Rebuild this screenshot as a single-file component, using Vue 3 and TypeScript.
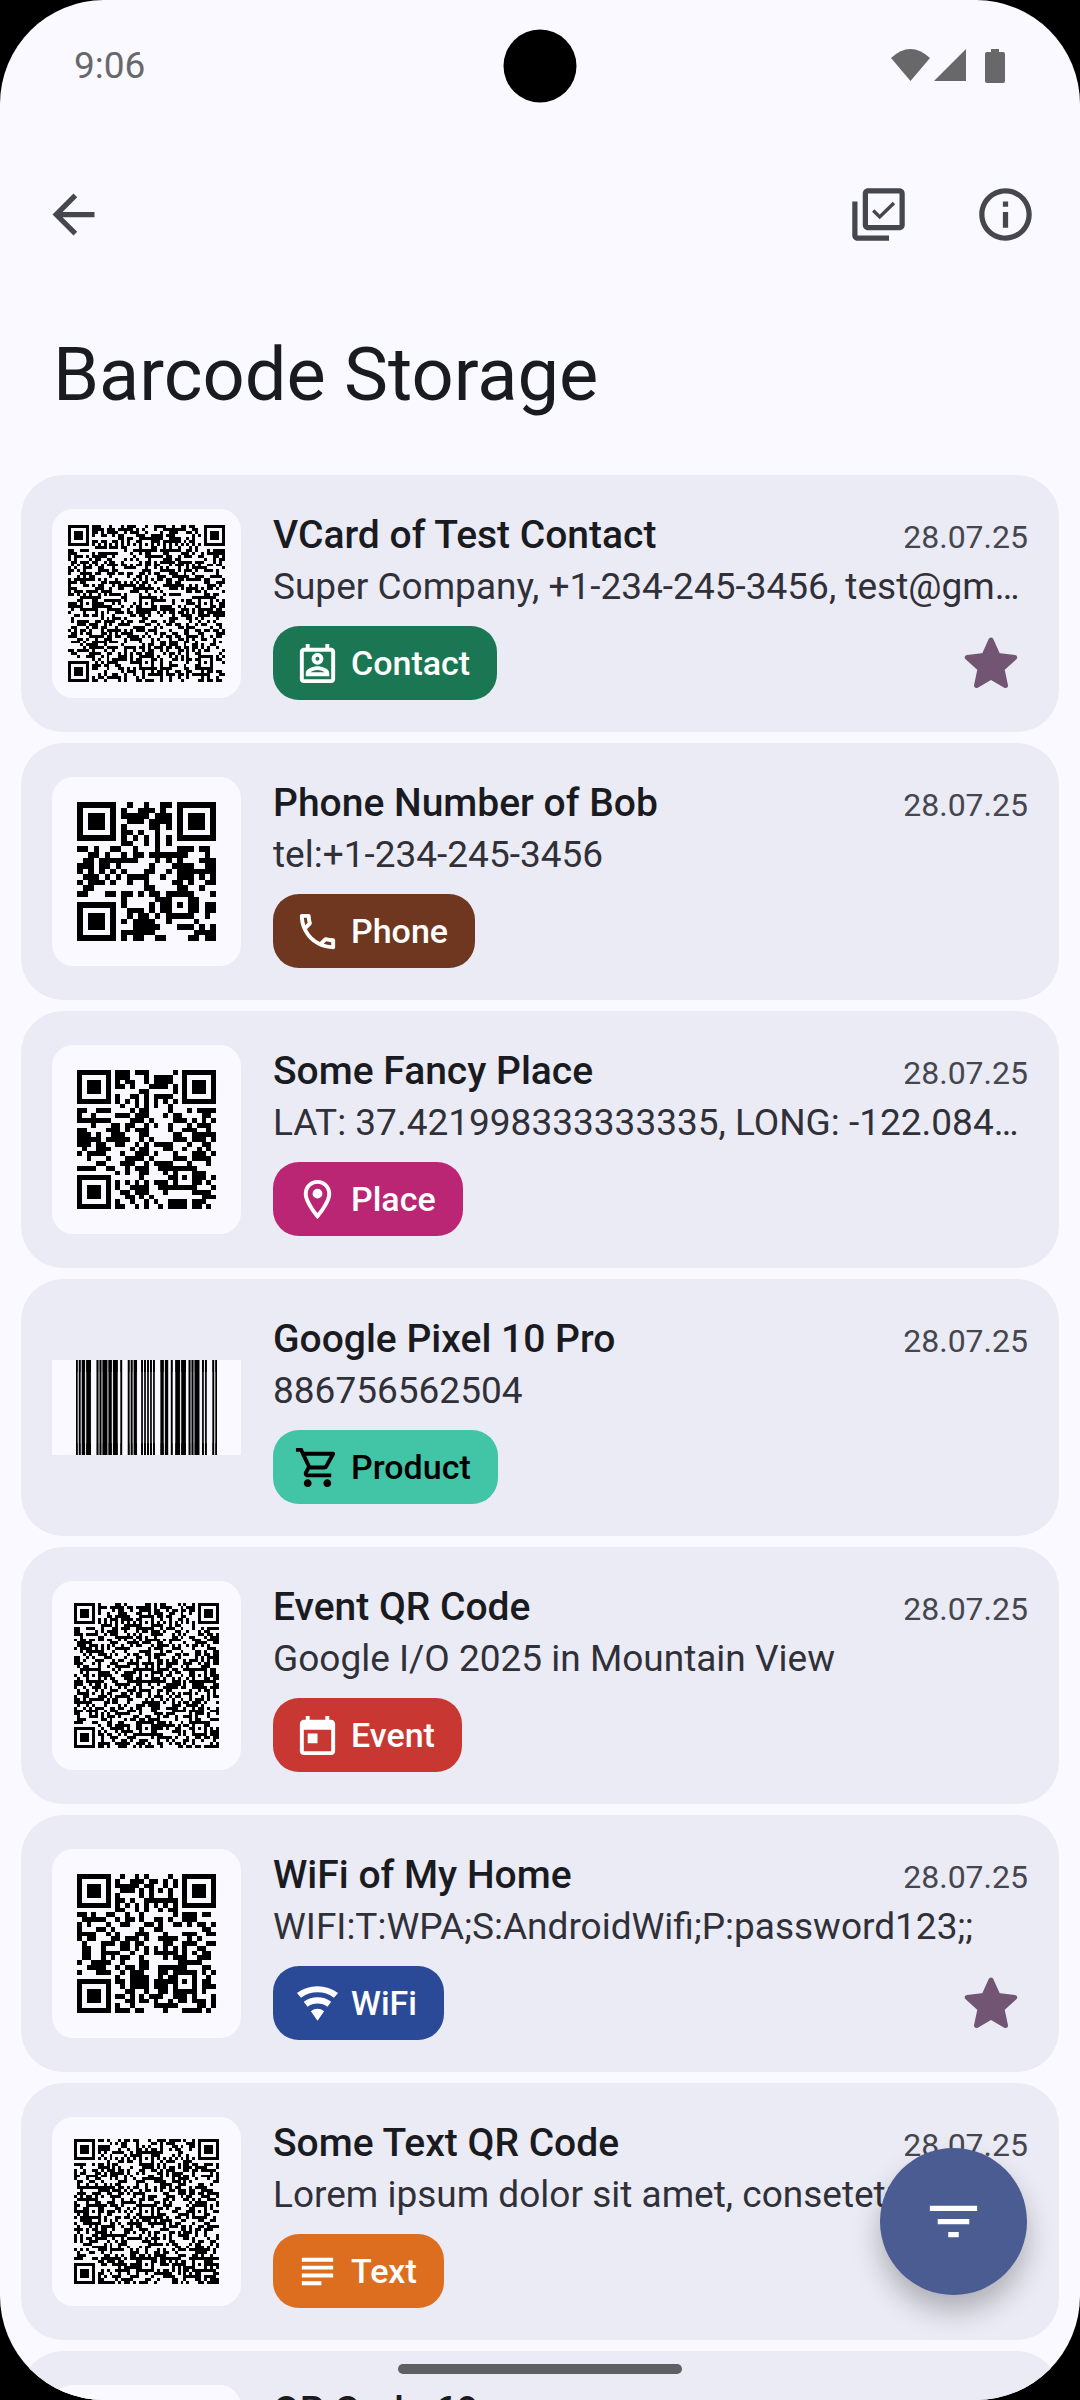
<script setup lang="ts">
type Matrix = boolean[][]

interface Chip {
  label: string
  icon: string
  background: string
  color: string
}

interface Entry {
  title: string
  detail: string
  date: string
  chip: Chip
  starred?: boolean
  qr?: { content: string; version: number; mask?: number; size: number }
  ean?: string
}

// Level L parameters per version: total codewords, ECC codewords per block, blocks, alignment centres
const VERSIONS: Record<number, [number, number, number, number[]]> = {
  2: [44, 10, 1, [6, 18]],
  3: [70, 15, 1, [6, 22]],
  8: [242, 24, 2, [6, 24, 42]],
  9: [292, 30, 2, [6, 26, 46]],
}

const MASKS: ((x: number, y: number) => boolean)[] = [
  (x, y) => (x + y) % 2 === 0,
  (_x, y) => y % 2 === 0,
  (x) => x % 3 === 0,
  (x, y) => (x + y) % 3 === 0,
  (x, y) => (Math.floor(x / 3) + Math.floor(y / 2)) % 2 === 0,
  (x, y) => ((x * y) % 2) + ((x * y) % 3) === 0,
  (x, y) => (((x * y) % 2) + ((x * y) % 3)) % 2 === 0,
  (x, y) => (((x + y) % 2) + ((x * y) % 3)) % 2 === 0,
]

function gfMultiply(a: number, b: number): number {
  let product = 0
  for (let i = 7; i >= 0; i--) {
    product = (product << 1) ^ ((product >>> 7) * 0x11d)
    product ^= ((b >>> i) & 1) * a
  }
  return product
}

function eccFor(data: number[], degree: number): number[] {
  const divisor: number[] = new Array(degree).fill(0)
  divisor[degree - 1] = 1
  let root = 1
  for (let i = 0; i < degree; i++) {
    for (let j = 0; j < degree; j++) {
      divisor[j] = gfMultiply(divisor[j], root)
      if (j + 1 < degree) divisor[j] ^= divisor[j + 1]
    }
    root = gfMultiply(root, 2)
  }
  const result: number[] = new Array(degree).fill(0)
  for (const byte of data) {
    const factor = byte ^ (result.shift() as number)
    result.push(0)
    divisor.forEach((c, i) => (result[i] ^= gfMultiply(c, factor)))
  }
  return result
}

function codewords(content: string, version: number): number[] {
  const [total, ecc, blocks] = VERSIONS[version]
  const capacity = total - ecc * blocks
  const bits: number[] = []
  const push = (value: number, length: number) => {
    for (let i = length - 1; i >= 0; i--) bits.push((value >>> i) & 1)
  }
  const bytes = Array.from(new TextEncoder().encode(content))
  // ECI header: UTF-8
  push(7, 4)
  push(26, 8)
  push(4, 4)
  push(bytes.length, 8)
  bytes.forEach((b) => push(b, 8))
  push(0, Math.min(4, capacity * 8 - bits.length))
  while (bits.length % 8) bits.push(0)
  for (let pad = 0xec; bits.length < capacity * 8; pad ^= 0xec ^ 0x11) push(pad, 8)

  const data: number[] = []
  for (let i = 0; i < capacity; i++) data.push(parseInt(bits.slice(i * 8, i * 8 + 8).join(''), 2))
  const length = capacity / blocks
  const parts = Array.from({ length: blocks }, (_, b) => data.slice(b * length, (b + 1) * length))
  const checks = parts.map((p) => eccFor(p, ecc))
  const out: number[] = []
  for (let i = 0; i < length; i++) parts.forEach((p) => out.push(p[i]))
  for (let i = 0; i < ecc; i++) checks.forEach((c) => out.push(c[i]))
  return out
}

function qrMatrix(content: string, version: number, mask: number): Matrix {
  const n = 17 + version * 4
  const dark: Matrix = Array.from({ length: n }, () => new Array(n).fill(false))
  const fixed: Matrix = Array.from({ length: n }, () => new Array(n).fill(false))
  const set = (x: number, y: number, on: boolean) => {
    if (x < 0 || y < 0 || x >= n || y >= n) return
    dark[y][x] = on
    fixed[y][x] = true
  }

  for (let i = 0; i < n; i++) {
    set(6, i, i % 2 === 0)
    set(i, 6, i % 2 === 0)
  }
  for (const [cx, cy] of [[3, 3], [n - 4, 3], [3, n - 4]]) {
    for (let dy = -4; dy <= 4; dy++)
      for (let dx = -4; dx <= 4; dx++) {
        const d = Math.max(Math.abs(dx), Math.abs(dy))
        set(cx + dx, cy + dy, d !== 2 && d !== 4)
      }
  }
  const centres = VERSIONS[version][3]
  const last = centres.length - 1
  centres.forEach((cx, i) =>
    centres.forEach((cy, j) => {
      if ((i === 0 && j === 0) || (i === 0 && j === last) || (i === last && j === 0)) return
      for (let dy = -2; dy <= 2; dy++)
        for (let dx = -2; dx <= 2; dx++) set(cx + dx, cy + dy, Math.max(Math.abs(dx), Math.abs(dy)) !== 1)
    }),
  )

  const format = (1 << 3) | mask
  let rem = format
  for (let i = 0; i < 10; i++) rem = (rem << 1) ^ ((rem >>> 9) * 0x537)
  const formatBits = ((format << 10) | rem) ^ 0x5412
  const bit = (value: number, i: number) => ((value >>> i) & 1) === 1
  for (let i = 0; i <= 5; i++) set(8, i, bit(formatBits, i))
  set(8, 7, bit(formatBits, 6))
  set(8, 8, bit(formatBits, 7))
  set(7, 8, bit(formatBits, 8))
  for (let i = 9; i < 15; i++) set(14 - i, 8, bit(formatBits, i))
  for (let i = 0; i < 8; i++) set(n - 1 - i, 8, bit(formatBits, i))
  for (let i = 8; i < 15; i++) set(8, n - 15 + i, bit(formatBits, i))
  set(8, n - 8, true)

  if (version >= 7) {
    let r = version
    for (let i = 0; i < 12; i++) r = (r << 1) ^ ((r >>> 11) * 0x1f25)
    const versionBits = (version << 12) | r
    for (let i = 0; i < 18; i++) {
      const a = n - 11 + (i % 3)
      const b = Math.floor(i / 3)
      set(a, b, bit(versionBits, i))
      set(b, a, bit(versionBits, i))
    }
  }

  const stream = codewords(content, version)
  let k = 0
  for (let right = n - 1; right >= 1; right -= 2) {
    if (right === 6) right = 5
    for (let v = 0; v < n; v++)
      for (let j = 0; j < 2; j++) {
        const x = right - j
        const y = ((right + 1) & 2) === 0 ? n - 1 - v : v
        if (fixed[y][x]) continue
        const on = k < stream.length * 8 && bit(stream[k >>> 3], 7 - (k & 7))
        dark[y][x] = on !== MASKS[mask](x, y)
        k++
      }
  }
  return dark
}

// Lower is better: long runs, 2x2 blocks, finder lookalikes and imbalance are penalised
function penalty(m: Matrix): number {
  const n = m.length
  let score = 0
  let total = 0
  const lines = m.concat(m.map((_, x) => m.map((row) => row[x])))
  for (const line of lines) {
    const s = line.map((on) => (on ? '1' : '0')).join('')
    for (const run of s.match(/0{5,}|1{5,}/g) ?? []) score += run.length - 2
    for (let i = 0; i + 7 <= n; i++) {
      if (s.slice(i, i + 7) !== '1011101') continue
      const before = s.slice(Math.max(0, i - 4), i)
      const after = s.slice(i + 7, i + 11)
      if (!before.includes('1') || !after.includes('1')) score += 40
    }
  }
  for (let y = 0; y < n; y++)
    for (let x = 0; x < n; x++) {
      if (m[y][x]) total++
      if (x + 1 < n && y + 1 < n && m[y][x] === m[y][x + 1] && m[y][x] === m[y + 1][x] && m[y][x] === m[y + 1][x + 1])
        score += 3
    }
  return score + Math.floor((Math.abs(total * 2 - n * n) * 10) / (n * n)) * 10
}

function bestMatrix(content: string, version: number): Matrix {
  return MASKS.map((_, mask) => qrMatrix(content, version, mask))
    .map((m) => ({ m, score: penalty(m) }))
    .reduce((a, b) => (b.score < a.score ? b : a)).m
}

function runs(row: boolean[], y: number): string {
  let d = ''
  for (let x = 0; x < row.length; x++) {
    if (!row[x]) continue
    const start = x
    while (x + 1 < row.length && row[x + 1]) x++
    d += `M${start} ${y}h${x - start + 1}v1h-${x - start + 1}z`
  }
  return d
}

function qrPath(e: Entry): string {
  if (!e.qr) return ''
  const { content, version, mask } = e.qr
  const matrix = mask === undefined ? bestMatrix(content, version) : qrMatrix(content, version, mask)
  return matrix.map(runs).join('')
}

// EAN-13: the first digit selects the parity of the six left-hand digits
function eanPath(code: string): string {
  const left = ['0001101', '0011001', '0010011', '0111101', '0100011', '0110001', '0101111', '0111011', '0110111', '0001011']
  const parity = ['LLLLLL', 'LLGLGG', 'LLGGLG', 'LLGGGL', 'LGLLGG', 'LGGLLG', 'LGGGLL', 'LGLGLG', 'LGLGGL', 'LGGLGL']
  const invert = (s: string) => s.replace(/./g, (c) => (c === '1' ? '0' : '1'))
  const digits = code.split('').map(Number)
  let modules = '101'
  for (let i = 1; i <= 6; i++) {
    const l = left[digits[i]]
    modules += parity[digits[0]][i - 1] === 'L' ? l : invert(l).split('').reverse().join('')
  }
  modules += '01010'
  for (let i = 7; i <= 12; i++) modules += invert(left[digits[i]])
  modules += '101'
  return runs(modules.split('').map((m) => m === '1'), 0)
}

const icons: Record<string, string> = {
  contact:
    'M19 4h-1V2h-2v2H8V2H6v2H5c-1.1 0-2 .9-2 2v14c0 1.1.9 2 2 2h14c1.1 0 2-.9 2-2V6c0-1.1-.9-2-2-2zm0 16H5V6h14v14zM12 12.6c1.65 0 3-1.35 3-3s-1.35-3-3-3-3 1.35-3 3 1.35 3 3 3zm0-4c.55 0 1 .45 1 1s-.45 1-1 1-1-.45-1-1 .45-1 1-1zM12 13.4c-2.03 0-6 1.08-6 3.58v1.52h12v-1.53c0-2.51-3.97-3.57-6-3.57zM8.31 16.5c.69-.56 2.38-1.12 3.69-1.12s3.01.56 3.69 1.12H8.31z',
  phone:
    'M6.54 5c.06.89.21 1.76.45 2.59l-1.2 1.2c-.41-1.2-.67-2.47-.76-3.79h1.51m9.86 12.02c.85.24 1.72.39 2.6.45v1.49c-1.32-.09-2.59-.35-3.8-.75l1.2-1.19M7.5 3H4c-.55 0-1 .45-1 1 0 9.39 7.61 17 17 17 .55 0 1-.45 1-1v-3.49c0-.55-.45-1-1-1-1.24 0-2.45-.2-3.57-.57-.1-.04-.21-.05-.31-.05-.26 0-.51.1-.71.29l-2.2 2.2c-2.83-1.45-5.15-3.76-6.59-6.59l2.2-2.2c.28-.28.36-.67.25-1.02C8.7 6.45 8.5 5.25 8.5 4c0-.55-.45-1-1-1z',
  place:
    'M12 2C8.13 2 5 5.13 5 9c0 5.25 7 13 7 13s7-7.75 7-13c0-3.87-3.13-7-7-7zM7 9c0-2.76 2.24-5 5-5s5 2.24 5 5c0 2.88-2.88 7.19-5 9.88C9.92 16.21 7 11.85 7 9zM12 6.5a2.5 2.5 0 1 0 0 5a2.5 2.5 0 1 0 0-5z',
  product:
    'M15.55 13c.75 0 1.41-.41 1.75-1.03l3.58-6.49c.37-.66-.11-1.48-.87-1.48H5.21l-.94-2H1v2h2l3.6 7.59-1.35 2.44C4.52 15.37 5.48 17 7 17h12v-2H7l1.1-2h7.45zM6.16 6h12.15l-2.76 5H8.53L6.16 6zM7 18c-1.1 0-1.99.9-1.99 2S5.9 22 7 22s2-.9 2-2-.9-2-2-2zm10 0c-1.1 0-1.99.9-1.99 2s.89 2 1.99 2 2-.9 2-2-.9-2-2-2z',
  event:
    'M19 4h-1V2h-2v2H8V2H6v2H5c-1.1 0-2 .9-2 2v14c0 1.1.9 2 2 2h14c1.1 0 2-.9 2-2V6c0-1.1-.9-2-2-2zm0 16H5V9h14v11zM7 11h5v5H7z',
  wifi:
    'M1.5 6.6A17.7 17.7 0 0 1 22.5 6.6L20.4 9A14.5 14.5 0 0 0 3.6 9zM5 11.1A12 12 0 0 1 19 11.1L17.1 13.7A8.7 8.7 0 0 0 6.9 13.7zM8.6 15.9A6 6 0 0 1 15.4 15.9L12 20.8z',
  text: 'M14 17H4v2h10v-2zm6-8H4v2h16V9zM4 15h16v-2H4v2zM4 5v2h16V5H4z',
}

const white = '#ffffff'
const lorem =
  'Lorem ipsum dolor sit amet, consetetur sadipscing elitr, sed diam nonumy eirmod tempor invidunt ut labore et dolore magna aliquyam erat, sed diam voluptua.'
const vcard =
  'BEGIN:VCARD\nVERSION:3.0\nN:Contact;Test;;;\nFN:Test Contact\nORG:Super Company\nTITLE:Manager\nTEL;TYPE=CELL:+1-234-245-3456\nEMAIL;TYPE=WORK:test@gmail.com\nADR;TYPE=WORK:;;Main Street 1;Mountain View;CA;94043;USA\nEND:VCARD'
const vevent =
  'BEGIN:VEVENT\nSUMMARY:Google I/O 2025\nLOCATION:Mountain View\nDESCRIPTION:Google I/O 2025 in Mountain View\nDTSTART:20250520T100000Z\nDTEND:20250521T180000Z\nEND:VEVENT'

const entries: Entry[] = [
  {
    title: 'VCard of Test Contact',
    detail: 'Super Company, +1-234-245-3456, test@gmail.com',
    date: '28.07.25',
    chip: { label: 'Contact', icon: 'contact', background: '#1b7753', color: white },
    starred: true,
    qr: { content: vcard, version: 9, size: 157 },
  },
  {
    title: 'Phone Number of Bob',
    detail: 'tel:+1-234-245-3456',
    date: '28.07.25',
    chip: { label: 'Phone', icon: 'phone', background: '#703720', color: white },
    qr: { content: 'tel:+1-234-245-3456', version: 2, mask: 7, size: 139 },
  },
  {
    title: 'Some Fancy Place',
    detail: 'LAT: 37.421998333333335, LONG: -122.08400000000002',
    date: '28.07.25',
    chip: { label: 'Place', icon: 'place', background: '#ba2674', color: white },
    qr: { content: 'geo:37.421998333333335,-122.08400000000002', version: 3, mask: 4, size: 139 },
  },
  {
    title: 'Google Pixel 10 Pro',
    detail: '886756562504',
    date: '28.07.25',
    chip: { label: 'Product', icon: 'product', background: '#42c5a6', color: '#000000' },
    ean: '8867565625046',
  },
  {
    title: 'Event QR Code',
    detail: 'Google I/O 2025 in Mountain View',
    date: '28.07.25',
    chip: { label: 'Event', icon: 'event', background: '#c83731', color: white },
    qr: { content: vevent, version: 8, size: 145 },
  },
  {
    title: 'WiFi of My Home',
    detail: 'WIFI:T:WPA;S:AndroidWifi;P:password123;;',
    date: '28.07.25',
    chip: { label: 'WiFi', icon: 'wifi', background: '#2a4a98', color: white },
    starred: true,
    qr: { content: 'WIFI:T:WPA;S:AndroidWifi;P:password123;;', version: 3, mask: 7, size: 139 },
  },
  {
    title: 'Some Text QR Code',
    detail: lorem,
    date: '28.07.25',
    chip: { label: 'Text', icon: 'text', background: '#dd6e20', color: white },
    qr: { content: lorem, version: 8, size: 145 },
  },
  {
    title: 'QR Code 69',
    detail: 'QR Code 69',
    date: '28.07.25',
    chip: { label: 'Text', icon: 'text', background: '#dd6e20', color: white },
    qr: { content: 'QR Code 69', version: 2, size: 139 },
  },
]
</script>

<template>
  <div class="device">
    <div class="screen">
      <div class="status">
        <span class="clock">9:06</span>
        <span class="camera"></span>
        <svg class="signals" viewBox="0 0 114 34" aria-hidden="true">
          <path d="M0 9Q19.500 -9 39 9L19.500 32z" />
          <path d="M75 0V32H43z" />
          <path d="M100 0h8v3h4q2 0 2 2v27q0 2 -2 2h-16q-2 0 -2 -2v-27q0 -2 2 -2h4z" />
        </svg>
      </div>

      <header>
        <nav class="toolbar" aria-label="Toolbar">
          <button type="button" aria-label="Back">
            <svg viewBox="0 0 24 24"><path d="M20 11H7.830l5.590-5.590L12 4l-8 8 8 8 1.410-1.410L7.830 13H20v-2z" /></svg>
          </button>
          <div class="actions">
            <button type="button" aria-label="Select all">
              <svg viewBox="0 0 24 24">
                <path
                  d="M20 2H8c-1.100 0-2 .9-2 2v12c0 1.100.9 2 2 2h12c1.100 0 2-.9 2-2V4c0-1.100-.9-2-2-2zm0 14H8V4h12v12zM4 20h12v2H4c-1.100 0-2-.9-2-2V7h2v13z"
                />
                <path class="tick" d="M10 10.500L12.450 12.900L17.900 7.600" />
              </svg>
            </button>
            <button type="button" aria-label="Info">
              <svg viewBox="0 0 24 24">
                <path
                  d="M11 7h2v2h-2zm0 4h2v6h-2zm1-9C6.480 2 2 6.480 2 12s4.480 10 10 10 10-4.480 10-10S17.520 2 12 2zm0 18c-4.410 0-8-3.590-8-8s3.590-8 8-8 8 3.590 8 8-3.590 8-8 8z"
                />
              </svg>
            </button>
          </div>
        </nav>
        <h1>Barcode Storage</h1>
      </header>

      <ul class="list">
        <li v-for="entry in entries" :key="entry.title" class="card">
          <div class="thumb">
            <div v-if="entry.qr" class="qr">
              <svg
                :viewBox="`0 0 ${17 + entry.qr.version * 4} ${17 + entry.qr.version * 4}`"
                :style="{ width: entry.qr.size + 'px' }"
                shape-rendering="crispEdges"
                aria-hidden="true"
              >
                <path :d="qrPath(entry)" />
              </svg>
            </div>
            <div v-else class="ean">
              <svg viewBox="0 0 95 1" preserveAspectRatio="none" aria-hidden="true">
                <path :d="eanPath(entry.ean as string)" />
              </svg>
            </div>
          </div>
          <div class="body">
            <div class="heading">
              <h2>{{ entry.title }}</h2>
              <time>{{ entry.date }}</time>
            </div>
            <p>{{ entry.detail }}</p>
            <div class="footer">
              <span class="chip" :style="{ background: entry.chip.background, color: entry.chip.color }">
                <svg viewBox="0 0 24 24" aria-hidden="true"><path fill-rule="evenodd" :d="icons[entry.chip.icon]" /></svg>
                {{ entry.chip.label }}
              </span>
              <svg v-if="entry.starred" class="star" viewBox="0 0 54 52" role="img" aria-label="Favorite">
                <path d="M27 3L34 18.500L50.700 20.500L38 32L41.500 48.500L27 40L12.500 48.500L16 32L3.300 20.500L20 18.500z" />
              </svg>
            </div>
          </div>
        </li>
      </ul>

      <button class="fab" type="button" aria-label="Filter">
        <svg viewBox="0 0 24 24" aria-hidden="true"><path d="M10 18h4v-2h-4v2zM3 6v2h18V6H3zm3 7h12v-2H6v2z" /></svg>
      </button>
      <div class="handle"></div>
    </div>
  </div>
</template>

<style>
body {
  margin: 0;
  background: #000000;
}
</style>

<style scoped>
.device {
  background: #000000;
  font-family: Roboto, "Noto Sans", sans-serif;
}
.screen {
  position: relative;
  display: flex;
  flex-direction: column;
  height: 100vh;
  overflow: hidden;
  border-radius: 104px;
  background: #f9f9ff;
  color: #1a1b21;
}
.status {
  position: relative;
  display: flex;
  flex: none;
  align-items: center;
  justify-content: space-between;
  height: 132px;
  padding: 0 75px 0 74px;
  box-sizing: border-box;
}
.clock {
  color: #68686c;
  font-size: 37px;
  line-height: 44px;
}
.camera {
  position: absolute;
  left: 50%;
  top: 50%;
  width: 73px;
  height: 73px;
  border-radius: 50%;
  background: #000000;
  transform: translate(-50%, -50%);
}
.signals {
  width: 114px;
  height: 34px;
  fill: #68686a;
}
header {
  flex: none;
}
button {
  display: flex;
  align-items: center;
  justify-content: center;
  padding: 0;
  border: 0;
  background: none;
  color: #46464f;
}
.toolbar {
  display: flex;
  align-items: center;
  justify-content: space-between;
  height: 165px;
  padding: 0 43px 0 42px;
}
.toolbar svg {
  width: 63px;
  height: 63px;
  fill: currentColor;
}
.toolbar .tick {
  fill: none;
  stroke: currentColor;
  stroke-width: 1.3;
}
.actions {
  display: flex;
  gap: 64px;
}
h1 {
  margin: 0;
  padding: 34px 53px 56px;
  font-size: 74px;
  font-weight: 400;
  line-height: 88px;
}
.list {
  display: flex;
  flex-direction: column;
  gap: 11px;
  margin: 0;
  padding: 0 21px;
  list-style: none;
}
.card {
  display: flex;
  gap: 32px;
  padding: 34px 31px 32px;
  border-radius: 42px;
  background: #ebebf5;
}
.thumb {
  display: flex;
  flex: none;
  align-items: center;
  width: 189px;
  height: 189px;
}
.qr,
.ean {
  display: flex;
  align-items: center;
  justify-content: center;
  width: 100%;
  background: #f9f9ff;
}
.qr {
  height: 100%;
  border-radius: 21px;
}
.qr svg {
  display: block;
}
.ean svg {
  width: 141px;
  height: 95px;
  stroke: #000000;
  stroke-width: 0.25;
}
.body {
  flex: 1;
  min-width: 0;
}
.heading {
  display: flex;
  align-items: baseline;
  justify-content: space-between;
  gap: 24px;
}
h2 {
  margin: 0;
  font-size: 39px;
  font-weight: 500;
  line-height: 53px;
}
time {
  color: #46464f;
  font-size: 32px;
  line-height: 40px;
}
p {
  margin: 0;
  overflow: hidden;
  color: #303038;
  font-size: 37px;
  line-height: 50px;
  text-overflow: ellipsis;
  white-space: nowrap;
}
.footer {
  display: flex;
  align-items: center;
  justify-content: space-between;
  margin-top: 14px;
}
.chip {
  display: flex;
  align-items: center;
  gap: 10px;
  height: 74px;
  padding: 0 27px 0 21px;
  border-radius: 26px;
  font-size: 34px;
  font-weight: 500;
  line-height: 40px;
}
.chip svg {
  width: 47px;
  height: 47px;
  fill: currentColor;
}
.star {
  width: 54px;
  height: 52px;
  margin-right: 10px;
  fill: #715573;
  stroke: #715573;
  stroke-width: 5;
  stroke-linejoin: round;
}
.fab {
  position: absolute;
  right: 53px;
  bottom: 105px;
  width: 147px;
  height: 147px;
  border-radius: 50%;
  background: #4a5c92;
  color: #ffffff;
  box-shadow: 0 16px 28px rgba(0, 0, 0, 0.26);
}
.fab svg {
  width: 63px;
  height: 63px;
  fill: currentColor;
}
.handle {
  position: absolute;
  left: 50%;
  bottom: 26px;
  width: 284px;
  height: 10px;
  border-radius: 5px;
  background: #5e5f63;
  transform: translateX(-50%);
}
</style>
